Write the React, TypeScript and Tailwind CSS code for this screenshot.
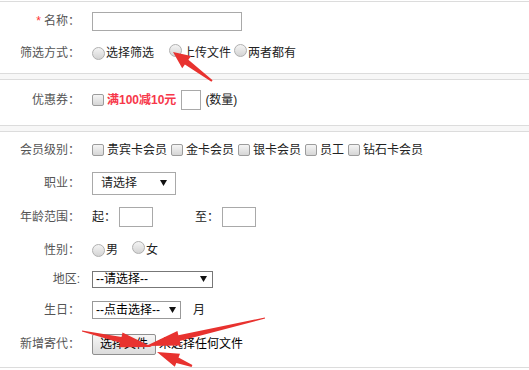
const font = "[font-family:'Liberation_Sans','Noto_Sans_CJK_SC',sans-serif]";

function Radio() {
  return (
    <span className="inline-block w-[13px] h-[13px] shrink-0 rounded-full border border-[#b0b0b0] bg-linear-to-b from-[#f4f4f4] to-[#d4d4d4]" />
  );
}

function Check() {
  return (
    <span className="inline-block w-[12px] h-[12px] shrink-0 rounded-[2px] border border-[#9c9c9c] bg-linear-to-b from-[#f5f5f5] to-[#d6d6d6]" />
  );
}

function Caret() {
  return (
    <svg width="7" height="6" viewBox="0 0 7 6" className="shrink-0">
      <polygon points="0,0 7,0 3.5,6" fill="#111" />
    </svg>
  );
}

function Row({ label, h, children }: { label: React.ReactNode; h: string; children?: React.ReactNode }) {
  return (
    <div className={`flex items-center ${h}`}>
      <div className="w-[80px] shrink-0 text-right text-[12px] text-[#555]">{label}</div>
      <div className="ml-[12px] flex items-center text-[12px] text-[#222]">{children}</div>
    </div>
  );
}

// tapered annotation arrow: from tail to tip
function arrow(tx: number, ty: number, px: number, py: number, L: number, W: number, w0: number, w1: number) {
  const dx = px - tx;
  const dy = py - ty;
  const len = Math.hypot(dx, dy);
  const ux = dx / len;
  const uy = dy / len;
  const nx = -uy;
  const ny = ux;
  const bx = px - ux * L;
  const by = py - uy * L;
  const pts = [
    [tx + nx * w0 / 2, ty + ny * w0 / 2],
    [bx + nx * w1 / 2, by + ny * w1 / 2],
    [bx + nx * W / 2, by + ny * W / 2],
    [px, py],
    [bx - nx * W / 2, by - ny * W / 2],
    [bx - nx * w1 / 2, by - ny * w1 / 2],
    [tx - nx * w0 / 2, ty - ny * w0 / 2],
  ];
  return pts.map((p) => p.map((v) => v.toFixed(1)).join(",")).join(" ");
}

export default function App() {
  return (
    <div className={`relative w-[529px] h-[370px] bg-white overflow-hidden ${font}`}>
      <div className="h-px" />
      {/* section 1 */}
      <div className="border-y border-[#dcdcdc] pb-[7px]">
        <Row label={<><span className="text-[#f33] mr-[3px]">*</span>名称：</>} h="h-[38px]">
          <div className="w-[150px] h-[19px] border border-[#a9a9a9] bg-white" />
        </Row>
        <Row label="筛选方式：" h="h-[26px]">
          <Radio />
          <span className="ml-px">选择筛选</span>
          <span className="ml-[15px]"><Radio /></span>
          <span className="ml-px">上传文件</span>
          <span className="ml-[3px]"><Radio /></span>
          <span className="ml-px">两者都有</span>
        </Row>
      </div>
      <div className="h-[5px] bg-[#f7f7f7]" />
      {/* section 2 */}
      <div className="border-y border-[#dcdcdc] pb-[5px]">
        <Row label="优惠券：" h="h-[40px]">
          <Check />
          <span className="ml-[3px] font-bold text-[#f7374a]">满100减10元</span>
          <div className="ml-[5px] w-[20px] h-[20px] border border-[#a9a9a9]" />
          <span className="ml-[4px]">(数量)</span>
        </Row>
      </div>
      <div className="h-[5px] bg-[#f7f7f7]" />
      {/* section 3 */}
      <div className="border-y border-[#dcdcdc] pb-[5px]">
        <Row label="会员级别：" h="h-[36px]">
          {["贵宾卡会员", "金卡会员", "银卡会员", "员工", "钻石卡会员"].map((t, i) => (
            <span key={t} className={`flex items-center ${i > 0 ? "ml-[4px]" : ""}`}>
              <Check />
              <span className="ml-[3px]">{t}</span>
            </span>
          ))}
        </Row>
        <Row label="职业：" h="h-[30px]">
          <div className="flex items-center justify-between w-[84px] h-[23px] border border-[#a9a9a9] pl-[8px] pr-[8px]">
            <span>请选择</span>
            <Caret />
          </div>
        </Row>
        <Row label="年龄范围：" h="h-[38px]">
          <span>起：</span>
          <div className="ml-[3px] w-[34px] h-[20px] border border-[#a9a9a9]" />
          <span className="ml-[42px]">至：</span>
          <div className="ml-[3px] w-[34px] h-[20px] border border-[#a9a9a9]" />
        </Row>
        <Row label="性别：" h="h-[28px]">
          <Radio />
          <span className="ml-px">男</span>
          <span className="ml-[14px]"><Radio /></span>
          <span className="ml-px">女</span>
        </Row>
        <Row label="地区:" h="h-[30px]">
          <div className="flex items-center justify-between w-[121px] h-[17px] border border-[#777] pl-[3px] pr-[5px] text-black">
            <span>--请选择--</span>
            <Caret />
          </div>
        </Row>
        <Row label="生日：" h="h-[32px]">
          <div className="flex items-center justify-between w-[89px] h-[18px] border border-[#999] pl-[3px] pr-[4px] text-black">
            <span>--点击选择--</span>
            <Caret />
          </div>
          <span className="ml-[12px]">月</span>
        </Row>
        <Row label="新增寄代：" h="h-[36px]">
          <div className="flex items-center justify-center w-[64px] h-[21px] rounded-[2px] border border-[#8f8f8f] bg-linear-to-b from-[#f6f6f6] to-[#dcdcdc] text-black">
            选择文件
          </div>
          <span className="ml-[3px] text-black">未选择任何文件</span>
        </Row>
      </div>

      {/* annotation arrows */}
      <svg className="absolute inset-0 pointer-events-none" width="529" height="370" viewBox="0 0 529 370">
        <polygon points={arrow(212, 81, 173, 52, 17, 15, 2, 6)} fill="#e8322f" />
        <polygon points={arrow(82, 331, 152, 347, 32, 15, 1, 6)} fill="#e8322f" />
        <polygon points={arrow(265, 318, 146, 346, 34, 15, 1, 6)} fill="#e8322f" />
        <polygon points={arrow(192, 366, 157, 352, 22, 14, 2, 6)} fill="#e8322f" />
      </svg>
    </div>
  );
}
